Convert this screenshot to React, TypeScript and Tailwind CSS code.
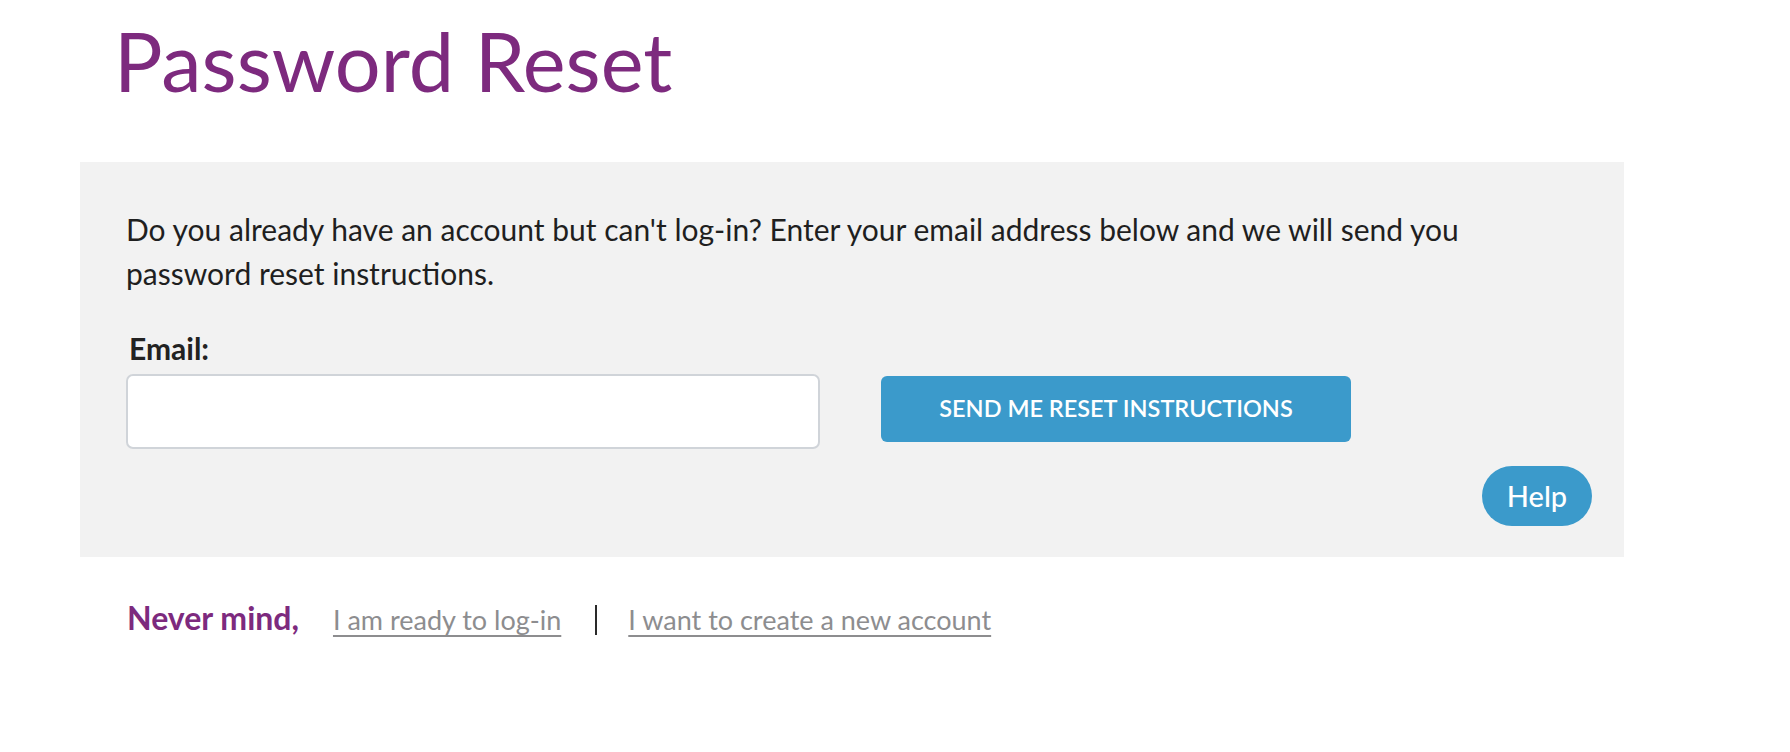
import React from "react";

export default function App() {
  return (
    <div className="min-h-[752px] bg-white" style={{ fontFamily: '"Lato", "Liberation Sans", sans-serif' }}>
      <h1 className="ml-[114px] pt-[21px] text-[81px] leading-[80px] font-normal text-[#7d2a7e]">Password Reset</h1>

      <div className="mt-[61px] ml-[80px] w-[1544px] bg-[#f2f2f2] pt-[45px] pb-[31px] pl-[46px] pr-[32px]">
        <p className="max-w-[1380px] text-[30px] leading-[44px] text-[#1f1f1f]">
          Do you already have an account but can't log-in? Enter your email address below and we will send you password reset instructions.
        </p>

        <label className="mt-[38px] ml-[3px] block text-[30px] leading-[30px] font-bold text-[#222222]">Email:</label>

        <div className="mt-[11px] flex items-start">
          <input
            type="email"
            className="h-[75px] w-[694px] rounded-[7px] border-2 border-[#d0d4d9] bg-white px-4 text-[28px] outline-none"
          />
          <button className="mt-[2px] ml-[61px] h-[66px] w-[470px] rounded-[6px] bg-[#3b9acb] text-[23.5px] font-semibold uppercase text-white">
            Send me reset instructions
          </button>
        </div>

        <div className="mt-[17px] flex justify-end">
          <button className="h-[60px] w-[110px] rounded-full bg-[#3b9acb] text-[29px] font-medium text-white">Help</button>
        </div>
      </div>

      <div className="mt-[43px] ml-[127px] flex items-baseline">
        <span className="text-[32px] leading-[36px] font-bold text-[#7d2a7e]">Never mind,</span>
        <a href="#" className="ml-[34px] text-[27px] leading-[36px] text-[#8d8d8f] underline underline-offset-[5px] decoration-[2px]">
          I am ready to log-in
        </a>
        <span className="ml-[34px] inline-block h-[30px] w-[2px] translate-y-[5px] bg-[#2a2a2a]"></span>
        <a href="#" className="ml-[31px] text-[27px] leading-[36px] text-[#8d8d8f] underline underline-offset-[5px] decoration-[2px]">
          I want to create a new account
        </a>
      </div>
    </div>
  );
}
